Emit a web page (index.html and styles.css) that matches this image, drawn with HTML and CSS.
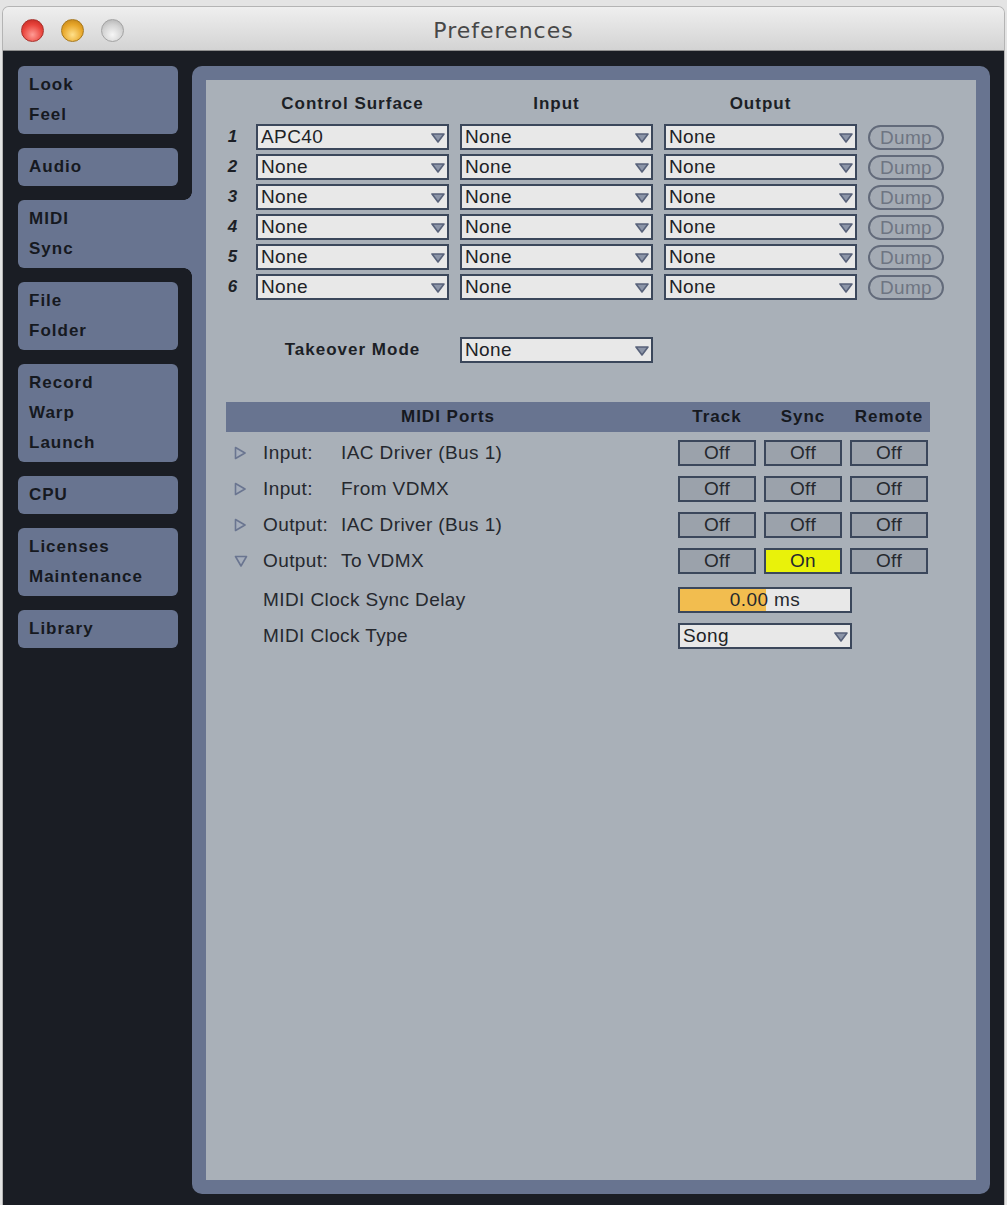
FILE: index.html
```html
<!DOCTYPE html>
<html lang="en">
<head>
  <meta charset="UTF-8" />
  <title>Preferences</title>
  <link rel="stylesheet" href="styles.css">
</head>
<body>

  <svg class="defs" width="0" height="0">
    <symbol id="arrow" viewBox="0 0 14 10">
      <polygon points="1,1 13,1 7,9" fill="#8c95a8" stroke="#58627a" stroke-width="1.6" stroke-linejoin="round"/>
    </symbol>
    <symbol id="tri-right" viewBox="0 0 12 14">
      <polygon points="1.5,1.5 11,7 1.5,12.5" fill="#a6aebb" stroke="#6a7590" stroke-width="1.6" stroke-linejoin="round"/>
    </symbol>
    <symbol id="tri-down" viewBox="0 0 14 12">
      <polygon points="1.5,1.5 12.5,1.5 7,11" fill="#a6aebb" stroke="#6a7590" stroke-width="1.6" stroke-linejoin="round"/>
    </symbol>
  </svg>

  <div class="window">
    <div class="titlebar">
      <div class="lights">
        <span class="light red"></span>
        <span class="light yellow"></span>
        <span class="light grey"></span>
      </div>
      <div class="title">Preferences</div>
      <div></div>
    </div>

    <div class="window-body">
      <!-- tabs -->
      <nav class="tabs">
        <div class="tab">Look<br>Feel</div>
        <div class="tab">Audio</div>
        <div class="tab active">MIDI<br>Sync</div>
        <div class="tab">File<br>Folder</div>
        <div class="tab">Record<br>Warp<br>Launch</div>
        <div class="tab">CPU</div>
        <div class="tab">Licenses<br>Maintenance</div>
        <div class="tab">Library</div>
      </nav>

      <main class="panel">
        <div class="panel-inner">

          <div class="surfaces">
            <div></div>
            <div class="col-head">Control Surface</div>
            <div class="col-head">Input</div>
            <div class="col-head">Output</div>
            <div></div>

            <div class="num">1</div>
            <div class="select"><span>APC40</span><svg class="arrow"><use href="#arrow"/></svg></div>
            <div class="select"><span>None</span><svg class="arrow"><use href="#arrow"/></svg></div>
            <div class="select"><span>None</span><svg class="arrow"><use href="#arrow"/></svg></div>
            <div class="dump">Dump</div>

            <div class="num">2</div>
            <div class="select"><span>None</span><svg class="arrow"><use href="#arrow"/></svg></div>
            <div class="select"><span>None</span><svg class="arrow"><use href="#arrow"/></svg></div>
            <div class="select"><span>None</span><svg class="arrow"><use href="#arrow"/></svg></div>
            <div class="dump">Dump</div>

            <div class="num">3</div>
            <div class="select"><span>None</span><svg class="arrow"><use href="#arrow"/></svg></div>
            <div class="select"><span>None</span><svg class="arrow"><use href="#arrow"/></svg></div>
            <div class="select"><span>None</span><svg class="arrow"><use href="#arrow"/></svg></div>
            <div class="dump">Dump</div>

            <div class="num">4</div>
            <div class="select"><span>None</span><svg class="arrow"><use href="#arrow"/></svg></div>
            <div class="select"><span>None</span><svg class="arrow"><use href="#arrow"/></svg></div>
            <div class="select"><span>None</span><svg class="arrow"><use href="#arrow"/></svg></div>
            <div class="dump">Dump</div>

            <div class="num">5</div>
            <div class="select"><span>None</span><svg class="arrow"><use href="#arrow"/></svg></div>
            <div class="select"><span>None</span><svg class="arrow"><use href="#arrow"/></svg></div>
            <div class="select"><span>None</span><svg class="arrow"><use href="#arrow"/></svg></div>
            <div class="dump">Dump</div>

            <div class="num">6</div>
            <div class="select"><span>None</span><svg class="arrow"><use href="#arrow"/></svg></div>
            <div class="select"><span>None</span><svg class="arrow"><use href="#arrow"/></svg></div>
            <div class="select"><span>None</span><svg class="arrow"><use href="#arrow"/></svg></div>
            <div class="dump">Dump</div>

            <div class="takeover"></div>
            <div class="takeover takeover-label">Takeover Mode</div>
            <div class="takeover select"><span>None</span><svg class="arrow"><use href="#arrow"/></svg></div>
          </div>

          <!-- MIDI ports -->
          <div class="ports">
            <div class="ports-head">
              <div>MIDI Ports</div>
              <div>Track</div>
              <div>Sync</div>
              <div>Remote</div>
            </div>

            <div class="port-row">
              <div class="port-name"><svg class="tri"><use href="#tri-right"/></svg><span class="dir">Input:</span>IAC Driver (Bus 1)</div>
              <div class="toggle">Off</div>
              <div class="toggle">Off</div>
              <div class="toggle">Off</div>
            </div>
            <div class="port-row">
              <div class="port-name"><svg class="tri"><use href="#tri-right"/></svg><span class="dir">Input:</span>From VDMX</div>
              <div class="toggle">Off</div>
              <div class="toggle">Off</div>
              <div class="toggle">Off</div>
            </div>
            <div class="port-row">
              <div class="port-name"><svg class="tri"><use href="#tri-right"/></svg><span class="dir">Output:</span>IAC Driver (Bus 1)</div>
              <div class="toggle">Off</div>
              <div class="toggle">Off</div>
              <div class="toggle">Off</div>
            </div>
            <div class="port-row">
              <div class="port-name"><svg class="tri tri-down"><use href="#tri-down"/></svg><span class="dir">Output:</span>To VDMX</div>
              <div class="toggle">Off</div>
              <div class="toggle on">On</div>
              <div class="toggle">Off</div>
            </div>

            <div class="port-row sub delay-row">
              <div class="sub-label">MIDI Clock Sync Delay</div>
              <div class="wide"><div class="delay">0.00 ms</div></div>
            </div>
            <div class="port-row sub">
              <div class="sub-label">MIDI Clock Type</div>
              <div class="wide"><div class="select"><span>Song</span><svg class="arrow"><use href="#arrow"/></svg></div></div>
            </div>
          </div>

        </div>
      </main>
    </div>
  </div>

</body>
</html>
```

FILE: styles.css
```css
body {
  margin: 0;
  padding: 0;
  background: #e4e4e4;
  font-family: "Liberation Sans", Arial, sans-serif;
  color: #22252b;
}

.defs {
  position: absolute;
  width: 0;
  height: 0;
}

.window {
  margin: 7px 3px 0;
  width: 1001px;
  border-radius: 6px 6px 0 0;
  overflow: hidden;
  box-shadow: 0 0 0 1px #b4b4b4;
}

/* Title bar */
.titlebar {
  height: 44px;
  box-sizing: border-box;
  padding-top: 3px;
  display: grid;
  grid-template-columns: 1fr auto 1fr;
  align-items: center;
  background: linear-gradient(#efefef, #d3d3d3);
  border-bottom: 1px solid #8e8e8e;
}

.lights {
  display: flex;
  gap: 17px;
  padding-left: 18px;
}

.light {
  width: 23px;
  height: 23px;
  border-radius: 50%;
  box-sizing: border-box;
}

.light.red {
  background: radial-gradient(circle at 50% 70%, #ff9c95 0, #e9443c 55%, #b8221c 100%);
  border: 1px solid #a8302b;
}

.light.yellow {
  background: radial-gradient(circle at 50% 70%, #ffe08a 0, #e8a72a 55%, #b97a12 100%);
  border: 1px solid #a7781c;
}

.light.grey {
  background: radial-gradient(circle at 50% 70%, #f6f6f6 0, #d3d3d3 55%, #aaaaaa 100%);
  border: 1px solid #a3a3a3;
}

.title {
  font-family: "DejaVu Sans", sans-serif;
  font-size: 22px;
  letter-spacing: 1px;
  color: #474747;
}

/* Body */
.window-body {
  height: 1154px;
  box-sizing: border-box;
  background: #1a1d24;
  display: flex;
  padding: 15px 14px 11px 15px;
}

.tabs {
  width: 174px;
  flex-shrink: 0;
  display: flex;
  flex-direction: column;
  gap: 14px;
}

.tab {
  width: 160px;
  box-sizing: border-box;
  background: #687490;
  border-radius: 6px;
  padding: 4px 11px;
  font-size: 17px;
  font-weight: bold;
  letter-spacing: 1px;
  line-height: 30px;
  color: #161920;
}

.tab.active {
  width: 174px;
  border-radius: 6px 0 0 6px;
  position: relative;
}

.tab.active::before,
.tab.active::after {
  content: "";
  position: absolute;
  right: 0;
  width: 8px;
  height: 8px;
}

.tab.active::before {
  top: -8px;
  background: radial-gradient(circle at 0 0, #1a1d24 7.5px, #687490 8px);
}

.tab.active::after {
  bottom: -8px;
  background: radial-gradient(circle at 0 100%, #1a1d24 7.5px, #687490 8px);
}

.panel {
  flex: 1;
  background: #687490;
  border-radius: 10px;
  padding: 14px;
  display: flex;
}

.panel-inner {
  flex: 1;
  background: #a9b0b8;
  padding: 13px 0 0 14px;
}

/* Control surfaces */
.surfaces {
  display: grid;
  grid-template-columns: 25px 193px 193px 193px 76px;
  column-gap: 11px;
  row-gap: 4px;
  align-items: center;
}

.col-head {
  font-size: 17px;
  font-weight: bold;
  letter-spacing: 1px;
  text-align: center;
  line-height: 22px;
  margin-bottom: 5px;
  color: #1c1f26;
}

.num {
  font-size: 17px;
  font-weight: bold;
  font-style: italic;
  text-align: center;
  color: #1c1f26;
}

.select {
  height: 26px;
  box-sizing: border-box;
  border: 2px solid #3b475b;
  background: #e8e8e8;
  display: flex;
  align-items: center;
  justify-content: space-between;
  padding: 0 2px 0 3px;
  font-size: 19px;
  letter-spacing: 0.4px;
  color: #202226;
}

.arrow {
  width: 14px;
  height: 10px;
  margin-top: 2px;
}

.dump {
  height: 25px;
  box-sizing: border-box;
  border: 2px solid #626a7a;
  border-radius: 13px;
  background: #a4abb4;
  text-align: center;
  font-size: 19px;
  letter-spacing: 0.3px;
  line-height: 21px;
  color: #6e7582;
}

.takeover {
  margin-top: 33px;
}

.takeover-label {
  font-size: 17px;
  font-weight: bold;
  letter-spacing: 1px;
  text-align: center;
  color: #1c1f26;
}

/* MIDI ports */
.ports {
  margin: 39px 0 0 6px;
  width: 704px;
  display: flex;
  flex-direction: column;
  gap: 10px;
}

.ports-head,
.port-row {
  display: grid;
  grid-template-columns: 444px 78px 78px 78px;
  column-gap: 8px;
  align-items: center;
}

.ports-head {
  height: 30px;
  background: #687490;
  padding-right: 2px;
  margin-bottom: -2px;
  font-size: 17px;
  font-weight: bold;
  letter-spacing: 1px;
  text-align: center;
  color: #161920;
}

.port-row {
  height: 26px;
  font-size: 19px;
  letter-spacing: 0.4px;
  color: #25282e;
}

.port-name {
  display: flex;
  align-items: center;
  padding-left: 8px;
  white-space: nowrap;
}

.tri {
  width: 12px;
  height: 14px;
  margin-right: 17px;
}

.tri.tri-down {
  width: 14px;
  height: 12px;
  margin-right: 15px;
}

.dir {
  width: 78px;
  flex-shrink: 0;
}

.toggle {
  height: 26px;
  box-sizing: border-box;
  border: 2px solid #3b475b;
  background: #9ba2ab;
  text-align: center;
  line-height: 22px;
  color: #25282e;
}

.toggle.on {
  background: #e9f20a;
}

.delay-row {
  margin-top: 3px;
}

.sub-label {
  padding-left: 37px;
}

.wide {
  grid-column: 2 / 5;
}

.wide .select {
  width: 174px;
}

.delay {
  width: 174px;
  height: 26px;
  box-sizing: border-box;
  border: 2px solid #3b475b;
  background: linear-gradient(to right, #f2bd4f 0, #f2bd4f 86px, #e8e8e8 86px);
  text-align: center;
  line-height: 22px;
}
```
